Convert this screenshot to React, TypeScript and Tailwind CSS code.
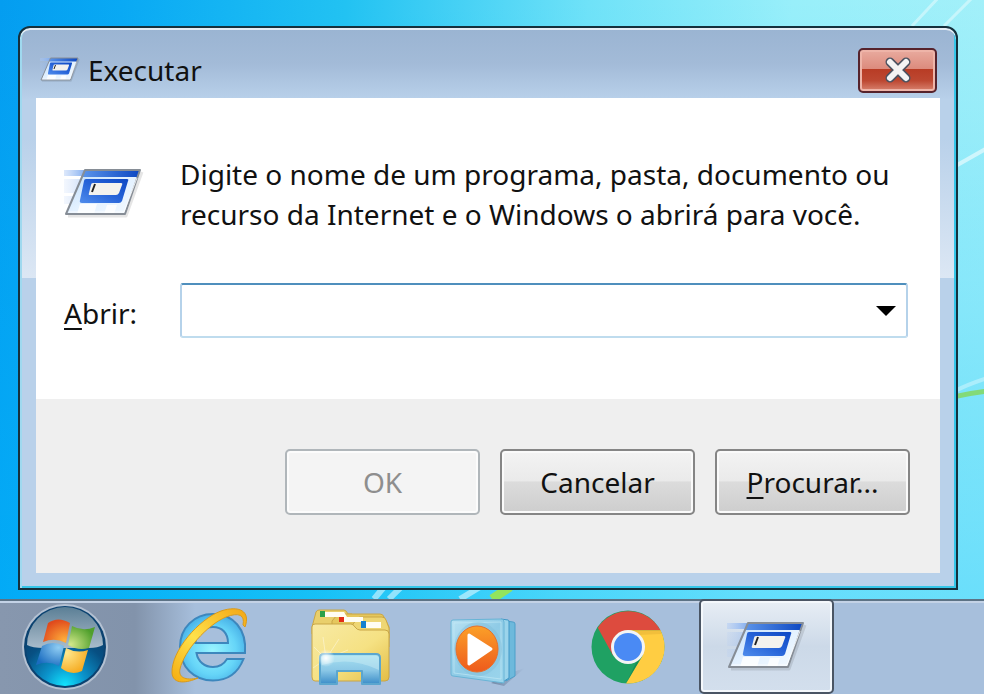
import { useState } from "react";

function RunIcon({ className }: { className: string }) {
  return (
    <svg viewBox="0 0 80 52" className={className} aria-hidden="true">
      <defs>
        <linearGradient id="runPaper" x1="0" y1="0" x2="1" y2="1">
          <stop offset="0" stopColor="#b9d9fb" />
          <stop offset="0.5" stopColor="#e3f1ff" />
          <stop offset="1" stopColor="#f4faff" />
        </linearGradient>
        <linearGradient id="runBlue" x1="0" y1="0" x2="1" y2="0">
          <stop offset="0" stopColor="#5b94ea" />
          <stop offset="1" stopColor="#0c47c2" />
        </linearGradient>
        <linearGradient id="runPanel" x1="0" y1="1" x2="1" y2="0">
          <stop offset="0" stopColor="#4f8cec" />
          <stop offset="0.5" stopColor="#2663d8" />
          <stop offset="1" stopColor="#0d48c4" />
        </linearGradient>
        <linearGradient id="runTrail" x1="0" y1="0" x2="1" y2="0">
          <stop offset="0" stopColor="#a9c6f5" stopOpacity="0.4" />
          <stop offset="1" stopColor="#7eabf0" />
        </linearGradient>
      </defs>
      <path d="M0 2h22l-3 6H0z" fill="url(#runTrail)" />
      <path d="M0 11h18l-6 14H0zM0 28h11l-3 8H0z" fill="url(#runTrail)" opacity="0.35" />
      <path d="M4 48h58l16-44" fill="none" stroke="#000" strokeOpacity="0.1" strokeWidth="3" strokeLinejoin="round" />
      <path d="M21 2h55L61 46H2z" fill="url(#runPaper)" />
      <path d="M16 36h17l-3 10H13zM43 37h10l-3 9H40z" fill="#fff" opacity="0.8" />
      <path d="M21 2h55l-3 7H18z" fill="url(#runBlue)" />
      <path d="M21 2h55L61 46H2z" fill="none" stroke="#868d96" strokeWidth="2" strokeLinejoin="round" />
      <path d="M73 10L60 44H5" fill="none" stroke="#fff" strokeOpacity="0.8" strokeWidth="1" />
      <path d="M22 11h41q2 0 1 2l-6 20q-1 2-3 2H18q-3 0-2-3l4-19q0-2 2-2z" fill="url(#runPanel)" />
      <path d="M29 15h28q2 0 1 2l-3 8q-1 2-3 2H26q-2 0-1-2l2-8q0-2 2-2z" fill="#f3f2ee" />
      <path d="M31 16l-3 8" stroke="#222" strokeWidth="2" />
    </svg>
  );
}

function StartIcon() {
  return (
    <svg viewBox="0 0 90 90" className="size-[90px]" aria-hidden="true">
      <defs>
        <radialGradient id="orb" cx="0.5" cy="1" r="0.9">
          <stop offset="0" stopColor="#12e6ff" />
          <stop offset="0.3" stopColor="#0b93cb" />
          <stop offset="0.65" stopColor="#075083" />
          <stop offset="1" stopColor="#0a3a66" />
        </radialGradient>
        <linearGradient id="gloss" x1="0" y1="0" x2="0" y2="1">
          <stop offset="0" stopColor="#5b7f96" />
          <stop offset="0.45" stopColor="#7f9aad" />
          <stop offset="1" stopColor="#a9bccb" />
        </linearGradient>
        <radialGradient id="flagRed" cx="0.8" cy="0.9" r="0.9">
          <stop offset="0" stopColor="#ffb13c" />
          <stop offset="1" stopColor="#e04a1c" />
        </radialGradient>
        <radialGradient id="flagGreen" cx="0.1" cy="0.8" r="0.9">
          <stop offset="0" stopColor="#d3e88a" />
          <stop offset="1" stopColor="#4f9f2c" />
        </radialGradient>
        <radialGradient id="flagBlue" cx="0.8" cy="0.2" r="0.9">
          <stop offset="0" stopColor="#8fcdf3" />
          <stop offset="1" stopColor="#1a6cc0" />
        </radialGradient>
        <radialGradient id="flagYellow" cx="0.2" cy="0.2" r="0.9">
          <stop offset="0" stopColor="#ffe98f" />
          <stop offset="1" stopColor="#f5a81c" />
        </radialGradient>
      </defs>
      <circle cx="45" cy="45" r="43" fill="#b4c1d2" />
      <circle cx="45" cy="45" r="41" fill="#0b4270" />
      <circle cx="45" cy="45" r="39" fill="url(#orb)" />
      <path d="M7 43a38 38 0 0 1 76 0q-5 3-14 3H24q-12 0-17-3z" fill="url(#gloss)" />
      <path d="M28 21q10-7 22 0l-4 20q-11-6-23-1z" fill="url(#flagRed)" />
      <path d="M52 24q11 6 23 1l-6 21q-11 3-21-3z" fill="url(#flagGreen)" />
      <path d="M22 44q11-6 22 0l-5 20q-11-6-23-1z" fill="url(#flagBlue)" />
      <path d="M46 46q11 6 22 2l-6 21q-11 5-21-3z" fill="url(#flagYellow)" />
    </svg>
  );
}

function ExplorerIcon() {
  return (
    <svg viewBox="0 0 80 80" className="size-20" aria-hidden="true">
      <defs>
        <radialGradient id="ieBody" cx="0.5" cy="0.55" r="0.6">
          <stop offset="0" stopColor="#9af4ff" />
          <stop offset="0.6" stopColor="#66d5f8" />
          <stop offset="1" stopColor="#3fa6e2" />
        </radialGradient>
        <linearGradient id="ieRing" x1="0" y1="1" x2="1" y2="0">
          <stop offset="0" stopColor="#f5ac10" />
          <stop offset="0.45" stopColor="#ffe14a" />
          <stop offset="1" stopColor="#f3a614" />
        </linearGradient>
      </defs>
      <path
        fillRule="evenodd"
        d="M74 46H25.500C27 55 34 60 42 60C49 60 53 57 56 52H72.500C67 66 56 73.500 42 73.500C23 73.500 9 60 9 40C9 21 23 7 42 7C62 7 76 22 74 46ZM24.500 36H57C57 26 51 20 42 20C32 20 25 26 24.500 36Z"
        fill="url(#ieBody)"
        stroke="#3d87bd"
        strokeWidth="2"
      />
      <path
        d="M74 20C80 4 68-2 50 4C28 12 0 44 1 66C2 78 16 76 27 71C14 74 7 70 9 62C13 44 36 18 55 10C68 5 74 8 72 18Z"
        fill="url(#ieRing)"
        stroke="#d99a1c"
        strokeWidth="1"
      />
    </svg>
  );
}

function FolderIcon() {
  return (
    <svg viewBox="0 0 80 80" className="size-20" aria-hidden="true">
      <defs>
        <linearGradient id="folder" x1="0" y1="0" x2="1" y2="1">
          <stop offset="0" stopColor="#f8eaa4" />
          <stop offset="0.55" stopColor="#f5e183" />
          <stop offset="1" stopColor="#e3bd45" />
        </linearGradient>
        <linearGradient id="stand" x1="0" y1="0" x2="0" y2="1">
          <stop offset="0" stopColor="#a9e2f1" />
          <stop offset="0.55" stopColor="#8ac7e6" />
          <stop offset="1" stopColor="#3c8dc8" />
        </linearGradient>
        <radialGradient id="shine">
          <stop offset="0" stopColor="#fff" />
          <stop offset="1" stopColor="#fff" stopOpacity="0" />
        </radialGradient>
      </defs>
      <g stroke="#c9a646" strokeWidth="1">
        <path d="M2 20L6 5q1-2 3-2h25q2 0 4 4h4v20H2z" fill="#e9cf6c" />
        <path d="M22 14l5-6q1-1 3-1h40q3 0 4 3l5 10v20H22z" fill="#e5c75d" />
        <path d="M43 17l5-6q1-1 3-1h21q3 0 4 3l3 8v10H43z" fill="#eed674" />
      </g>
      <path d="M12 5h22l3 5H12z" fill="#fffdf3" />
      <path d="M10 4h5v6h-5z" fill="#2aa04a" />
      <path d="M31 10h22v5H31z" fill="#fffdf3" />
      <path d="M29 10h5v5h-5z" fill="#e32d17" />
      <path d="M53 15h18v6H53z" fill="#fffdf3" />
      <path d="M51 14h5v7h-5z" fill="#1580d0" />
      <path d="M2 20q0-3 3-3h36q2 0 4 3t5 3h25q4 0 4 4v43q0 4-4 4H5q-3 0-3-4z" fill="url(#folder)" stroke="#c9a646" strokeWidth="1" />
      <path d="M16 52L4 40M16 52l-3-22M16 52l13-20M16 52l22-9M16 52L3 61" stroke="#fff" strokeOpacity="0.4" strokeWidth="1" />
      <path d="M10 51q0-4 4-4h52q4 0 4 4v26H52V64H27v13H10z" fill="url(#stand)" stroke="#5ba6cf" strokeWidth="2" strokeLinejoin="round" />
      <path d="M12 58q28-9 57 5V51q0-2-3-2H14q-2 0-2 2z" fill="#d5f2f8" opacity="0.4" />
      <circle cx="16" cy="51" r="9" fill="url(#shine)" />
    </svg>
  );
}

function MediaPlayerIcon() {
  return (
    <svg viewBox="0 0 80 80" className="size-20" aria-hidden="true">
      <defs>
        <linearGradient id="sleeve" x1="0" y1="0" x2="1" y2="1">
          <stop offset="0" stopColor="#b9e2f3" />
          <stop offset="0.5" stopColor="#8fcbe6" />
          <stop offset="1" stopColor="#9bd5ec" />
        </linearGradient>
        <linearGradient id="play" x1="0" y1="0" x2="0" y2="1">
          <stop offset="0" stopColor="#fba028" />
          <stop offset="1" stopColor="#ee5a1c" />
        </linearGradient>
        <linearGradient id="cast" x1="0" y1="0" x2="1" y2="0">
          <stop offset="0" stopColor="#4f6684" stopOpacity="0.6" />
          <stop offset="1" stopColor="#4f6684" stopOpacity="0" />
        </linearGradient>
      </defs>
      <path d="M42 76l13 3 21-18-12 4z" fill="url(#cast)" />
      <path d="M57 14l7 1q2 0 2 2v52l-9 5z" fill="#6db9dc" stroke="#4d9fc9" />
      <path d="M52 12l7 1q1 0 1 2v56l-8 5z" fill="#9bd4eb" stroke="#3f97c6" />
      <path d="M4 13l48-1q3 0 3 3v61L4 69q-2 0-2-2V15q0-2 2-2z" fill="url(#sleeve)" stroke="#68b4d6" />
      <path d="M5 16l47-1v57L5 66z" fill="none" stroke="#c7ebf6" strokeOpacity="0.6" />
      <ellipse cx="29" cy="42" rx="24" ry="27" fill="#7dbbd8" opacity="0.4" />
      <ellipse cx="28" cy="42" rx="21" ry="23" fill="url(#play)" stroke="#e66f2c" />
      <path d="M20 28l22 14-22 15z" fill="#fff" stroke="#fff" strokeWidth="3" strokeLinejoin="round" />
    </svg>
  );
}

function ChromeIcon() {
  return (
    <svg viewBox="0 0 80 80" className="size-20" aria-hidden="true">
      <circle cx="40" cy="40" r="36.500" fill="#1fa163" />
      <path d="M9.800 20.700A36.500 36.500 0 0 1 72.500 23.300H40L25 48.500Z" fill="#dd4b3e" />
      <path d="M72.500 23.300A36.500 36.500 0 0 1 38 76.500L54.700 48.500L40 23.300Z" fill="#ffcd42" />
      <path d="M40 23h32.500l1 4-24 1z" fill="#d9a52e" opacity="0.35" />
      <path d="M54 49L38 76.500 49 54z" fill="#0c7a45" opacity="0.5" />
      <circle cx="40" cy="40" r="17" fill="#f3f4f4" />
      <circle cx="40" cy="40" r="14" fill="#4a8af4" />
    </svg>
  );
}

function Wallpaper() {
  return (
    <svg
      viewBox="0 0 984 600"
      preserveAspectRatio="none"
      fill="none"
      className="absolute inset-0 h-full w-full"
      aria-hidden="true"
    >
      <path d="M912 26L940-4M944 26L974-4" stroke="#fff" strokeOpacity="0.4" strokeWidth="3" />
      <path d="M956 166q14-8 30-17" stroke="#fff" strokeOpacity="0.55" strokeWidth="4" />
      <path d="M956 391q12-6 30-12" stroke="#fff" strokeOpacity="0.35" strokeWidth="4" />
      <path d="M956 397q14-3 30-5" stroke="#83da78" strokeWidth="5" />
      <path d="M374 600l10-12M389 600l12-12M460 600l20-12" stroke="#fff" strokeOpacity="0.5" strokeWidth="6" />
      <path d="M492 600l18-12" stroke="#93e45c" strokeWidth="9" />
    </svg>
  );
}

const pushButton =
  "h-[66px] w-[195px] rounded-[5px] border-2 border-[#858585] bg-[linear-gradient(#f3f3f3_0%,#eaeaea_48%,#dcdcdc_50%,#cdcdcd_100%)] text-[28px] shadow-[inset_0_0_0_2px_#fafafa]";

const apps = [
  { name: "Internet Explorer", icon: <ExplorerIcon /> },
  { name: "Windows Explorer", icon: <FolderIcon /> },
  { name: "Windows Media Player", icon: <MediaPlayerIcon /> },
  { name: "Google Chrome", icon: <ChromeIcon /> },
];

export default function App() {
  const [command, setCommand] = useState("");

  return (
    <div className="flex min-h-screen flex-col bg-[#a7bfdc] font-['Noto_Sans','Open_Sans',sans-serif] text-[#111]">
      <main className="relative flex flex-1 flex-col bg-[linear-gradient(180deg,rgba(0,190,255,0)_0%,rgba(0,190,255,0.35)_100%),linear-gradient(93deg,#049df0_0%,#09a9f4_12%,#22c2f2_34%,#6fe2f8_58%,#98effa_78%,#a4f0f9_100%)] pt-[26px] pr-[26px] pb-[9px] pl-[18px]">
        <Wallpaper />
        <section
          role="dialog"
          aria-labelledby="run-title"
          className="relative flex flex-1 flex-col rounded-t-xl border-2 border-[#15303c] bg-[linear-gradient(#9ab4d2_0px,#a3bbd8_36px,#b9d1ea_72px,#b9d1ea_110px,#dce7f4_250px,#b9d1ea_250px)] px-4 pb-[15px] shadow-[inset_0_2px_0_#e6edf4,inset_2px_0_0_#9fd9ef,inset_-2px_-2px_0_#35c6e8]"
        >
          <header className="flex h-[70px] items-center gap-2 pt-[14px] pr-[3px] pl-1">
            <RunIcon className="w-10" />
            <h1 id="run-title" className="flex-1 text-[28px] leading-10">Executar</h1>
            <button
              aria-label="Fechar"
              className="flex h-[45px] w-[79px] items-center justify-center rounded-[5px] border-2 border-[#56232c] bg-[linear-gradient(#e9ab9f_0%,#dc8b7d_46%,#b83c25_47%,#bd4832_75%,#d98471_100%)] shadow-[inset_0_0_0_2px_#eeb4a8]"
            >
              <svg viewBox="0 0 28 26" className="w-7" aria-hidden="true">
                <path d="M6 5l16 16M22 5L6 21" stroke="#4b5260" strokeWidth="9" strokeLinejoin="round" strokeLinecap="round" />
                <path d="M6 5l16 16M22 5L6 21" stroke="#f4f4f4" strokeWidth="6" strokeLinecap="round" />
              </svg>
            </button>
          </header>

          <form className="flex flex-1 flex-col bg-[#efefef]" onSubmit={(e) => e.preventDefault()}>
            <div className="grid grid-cols-[116px_1fr] items-center gap-y-[49px] bg-white pt-14 pr-8 pb-[61px] pl-7">
              <RunIcon className="w-20" />
              <p className="text-[28px] leading-10">
                Digite o nome de um programa, pasta, documento ou recurso da Internet e o Windows o abrirá para você.
              </p>
              <label htmlFor="command" className="pt-1 text-[28px] leading-10">
                <span className="underline decoration-2 underline-offset-4">A</span>brir:
              </label>
              <div className="flex h-[55px] rounded-[3px] border-2 border-t-[#4f8fbd] border-r-[#b5d2ea] border-b-[#bfdcee] border-l-[#b5d2ea] bg-white">
                <input
                  id="command"
                  type="text"
                  value={command}
                  onChange={(e) => setCommand(e.target.value)}
                  className="min-w-0 flex-1 px-2 text-[28px] outline-none"
                />
                <button type="button" aria-label="Mostrar histórico" className="flex w-10 items-center justify-center">
                  <svg viewBox="0 0 20 10" className="w-5" aria-hidden="true">
                    <path d="M0 0h20L10 10z" fill="#000" />
                  </svg>
                </button>
              </div>
            </div>
            <div className="flex justify-end gap-5 pt-[50px] pr-[30px] pb-[58px]">
              <button
                type="submit"
                disabled
                className="h-[66px] w-[195px] rounded-[5px] border-2 border-[#b0b6ba] bg-[#f4f4f4] text-[28px] text-[#8e8e8e] shadow-[inset_0_0_0_2px_#fcfcfc]"
              >
                OK
              </button>
              <button type="button" className={pushButton}>Cancelar</button>
              <button type="button" className={pushButton}>
                <span className="underline decoration-2 underline-offset-4">P</span>rocurar...
              </button>
            </div>
          </form>
        </section>
      </main>

      <nav
        aria-label="Barra de tarefas"
        className="flex h-[95px] bg-[linear-gradient(90deg,#8797ae_0px,#8293ab_135px,#a7bfdc_195px)] shadow-[inset_0_2px_0_#5c7285,inset_0_4px_0_#c3d2e6]"
      >
        <button aria-label="Iniciar" className="mr-[13px] flex w-[130px] items-center justify-center">
          <StartIcon />
        </button>
        {apps.map((app) => (
          <button key={app.name} aria-label={app.name} className="mr-1 flex w-[135px] items-center justify-center">
            {app.icon}
          </button>
        ))}
        <button
          aria-label="Executar"
          className="flex w-[135px] items-center justify-center rounded-[5px] border-2 border-[#4a5564] bg-linear-to-b from-[#e8eef5] via-[#ccd9e8] to-[#d3dfed] shadow-[inset_0_0_0_2px_#f4f8fc]"
        >
          <RunIcon className="w-20" />
        </button>
      </nav>
    </div>
  );
}
